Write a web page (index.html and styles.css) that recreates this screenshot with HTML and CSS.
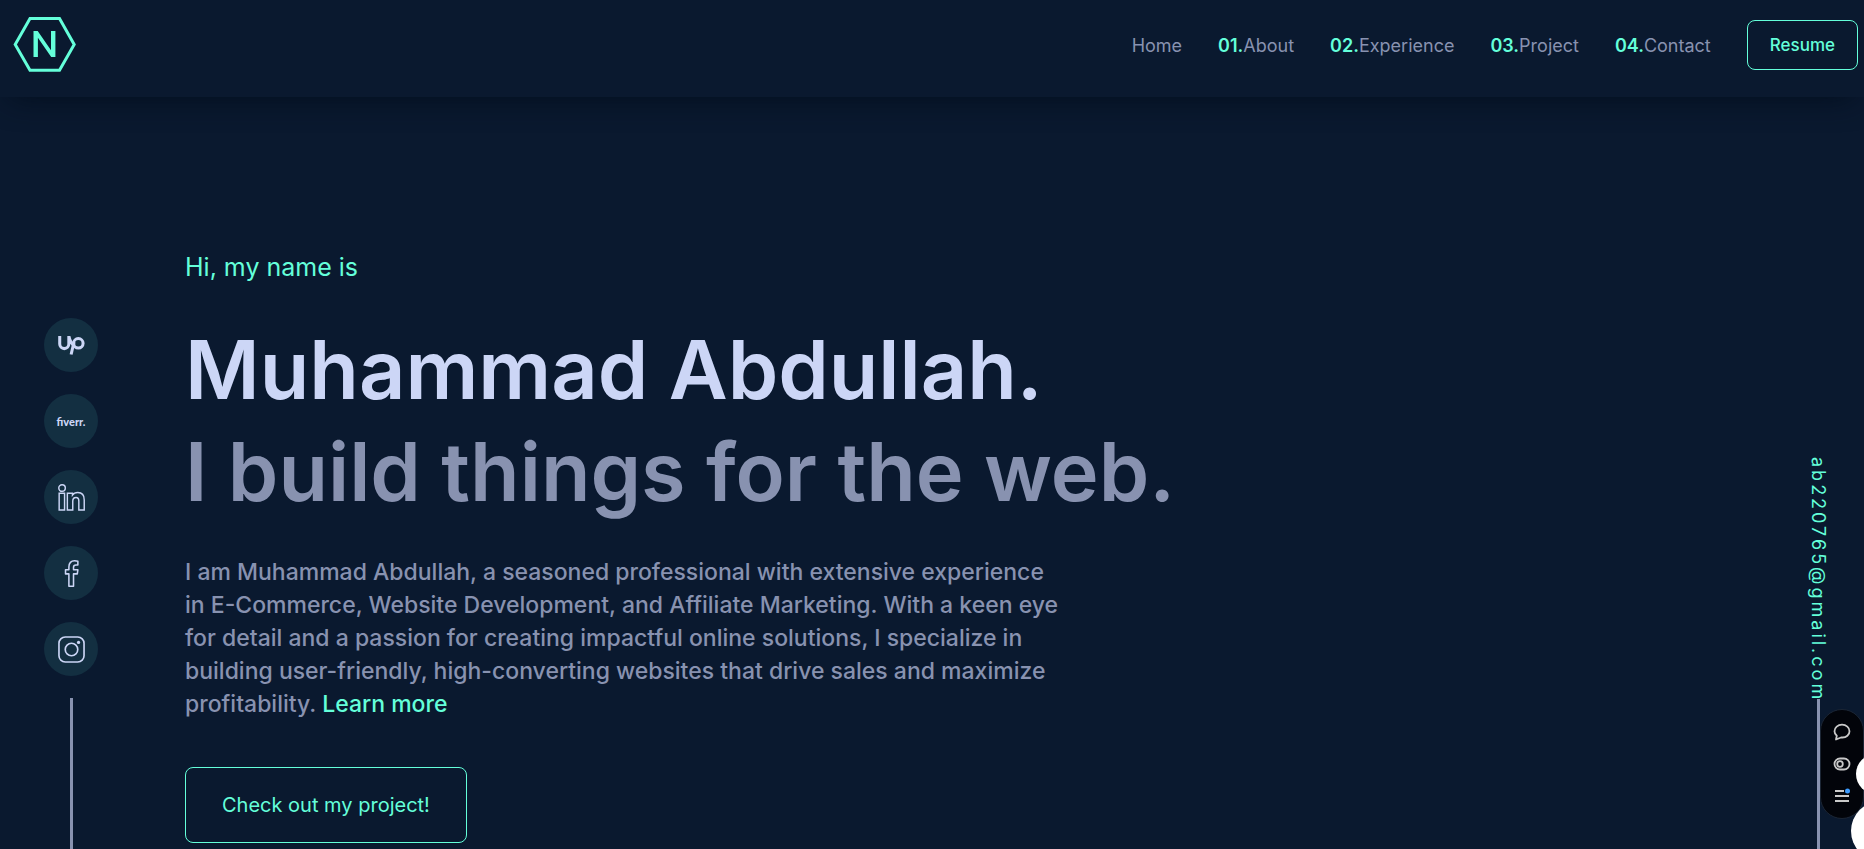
FILE: index.html
```html
<!DOCTYPE html>
<html lang="en">
<head>
<meta charset="utf-8">
<meta name="viewport" content="width=device-width, initial-scale=1">
<title>Muhammad Abdullah</title>
<link rel="stylesheet" href="styles.css">
</head>
<body>
<header class="header">
  <a class="logo" href="#home" aria-label="Home">
    <svg width="64" height="56" viewBox="0 0 64 56" fill="none" stroke="currentColor" stroke-width="3">
      <path d="M17 2.500H46.500L61.200 28.500L46.500 54.200H17L2.200 28.500Z"/>
      <path d="M20.500 41V15H24.700L38 34.200V15H42.400V41H38.200L24.900 21.800V41Z" fill="currentColor" stroke="none"/>
    </svg>
  </a>
  <nav class="nav">
    <a class="nav-link" href="#home">Home</a>
    <a class="nav-link" href="#about"><span class="num">01.</span>About</a>
    <a class="nav-link" href="#experience"><span class="num">02.</span>Experience</a>
    <a class="nav-link" href="#project"><span class="num">03.</span>Project</a>
    <a class="nav-link" href="#contact"><span class="num">04.</span>Contact</a>
    <a class="resume" href="#resume">Resume</a>
  </nav>
</header>
<div class="page">
  <aside class="rail social">
    <a class="social-link" href="#upwork" aria-label="Upwork">
      <svg width="27" height="19" viewBox="0 0 28 20" fill="none" stroke="currentColor" stroke-width="3.200">
        <path d="M1.600 0V8.500A4.800 4.800 0 0 0 11.200 8.500V0C12 4 14.500 8.500 17 10.500"/>
        <circle cx="21.200" cy="7.700" r="5"/>
        <path d="M16.600 6.500L13.600 19.500"/>
      </svg>
    </a>
    <a class="social-link wordmark" href="#fiverr">fiverr.</a>
    <a class="social-link" href="#linkedin" aria-label="LinkedIn">
      <svg width="27" height="27" viewBox="0 0 28 28" fill="none" stroke="currentColor" stroke-width="1.500">
        <circle cx="4.200" cy="4.200" r="3.400"/>
        <path d="M1.200 9.500H6.800V27H1.200ZM9.700 9.500H15V11.500C16.200 9.800 18 8.900 20.500 8.900C25 8.900 27.200 11.800 27.200 16.500V27H21.600V17.500C21.600 15 20.700 13.900 18.700 13.900C16.500 13.900 15.300 15.300 15.300 17.800V27H9.700Z"/>
      </svg>
    </a>
    <a class="social-link" href="#facebook" aria-label="Facebook">
      <svg width="27" height="27" viewBox="0 0 28 28" fill="none" stroke="currentColor" stroke-width="1.600" stroke-linejoin="round">
        <path d="M11.300 27.200V14.400H7.800V10.200H11.300V7.300C11.300 3 13.500.8 17.200.8C18.600.8 19.700 1 20.600 1.300V5.200H18.500C16.700 5.200 16.100 6 16.100 7.600V10.200H20.600L20 14.400H16.100V27.200Z"/>
      </svg>
    </a>
    <a class="social-link" href="#instagram" aria-label="Instagram">
      <svg width="27" height="27" viewBox="0 0 28 28" fill="none" stroke="currentColor" stroke-width="1.700">
        <rect x="1" y="1" width="26" height="26" rx="6.500"/>
        <circle cx="14" cy="14" r="6.500"/>
        <circle cx="21.300" cy="6.700" r="1.700" fill="currentColor" stroke="none"/>
      </svg>
    </a>
    <span class="rail-line"></span>
  </aside>
  <main class="hero">
    <p class="greeting">Hi, my name is</p>
    <h1 class="title">Muhammad Abdullah.</h1>
    <h2 class="title subtitle">I build things for the web.</h2>
    <p class="intro">
      I am Muhammad Abdullah, a seasoned professional with extensive experience<br>
      in E-Commerce, Website Development, and Affiliate Marketing. With a keen eye<br>
      for detail and a passion for creating impactful online solutions, I specialize in<br>
      building user-friendly, high-converting websites that drive sales and maximize<br>
      profitability. <a class="more" href="#about">Learn more</a>
    </p>
    <a class="cta" href="#project">Check out my project!</a>
  </main>
  <aside class="rail contact">
    <a class="email" href="mailto:ab220765@gmail.com">ab220765@gmail.com</a>
    <span class="rail-line"></span>
  </aside>
</div>
<div class="toolbar">
  <button class="tool" type="button" aria-label="Comment">
    <svg width="18" height="18" viewBox="0 0 18 18" fill="none" stroke="currentColor" stroke-width="1.800" stroke-linejoin="round"><path d="M3 16.500L3.800 12.800C2.300 11.500 1.500 10 1.500 8.200C1.500 4.500 4.800 1.700 9 1.700C13.200 1.700 16.500 4.500 16.500 8.200C16.500 12 13.200 14.500 9.500 14.500H8Z"/></svg>
  </button>
  <button class="tool" type="button" aria-label="Toggle">
    <svg width="18" height="18" viewBox="0 0 18 18" fill="none" stroke="currentColor" stroke-width="1.800"><rect x="1.500" y="3.500" width="15" height="11" rx="5.500"/><circle cx="7" cy="9" r="2.800"/></svg>
  </button>
  <button class="tool" type="button" aria-label="Menu">
    <svg width="18" height="18" viewBox="0 0 18 18" fill="none" stroke="currentColor" stroke-width="2"><path d="M2 4H11M2 9H16M2 14H16"/><circle cx="14.500" cy="4" r="2.500" fill="#3b9bff" stroke="none"/></svg>
  </button>
</div>
<span class="bubble bubble-small"></span>
<span class="bubble bubble-large"></span>
</body>
</html>
```
FILE: styles.css
```css
* { box-sizing: border-box; }
body {
  margin: 0;
  height: 100vh;
  display: flex;
  flex-direction: column;
  overflow: hidden;
  background: #0a192f;
  color: #8892b0;
  font-family: Inter, "Liberation Sans", sans-serif;
}
a { color: inherit; text-decoration: none; }
h1, h2, p { margin: 0; }
svg { display: block; }
.header {
  flex: none;
  display: flex;
  justify-content: space-between;
  align-items: flex-start;
  padding: 16px 6px 0 13px;
  height: 97px;
  box-shadow: 0 10px 30px -10px rgba(2, 12, 27, 0.9);
}
.logo { color: #64ffda; }
.nav {
  display: flex;
  align-items: center;
  gap: 36px;
  padding-top: 4px;
  font-size: 18px;
}
.num, .resume { color: #64ffda; }
.num { font-weight: 600; }
.resume {
  padding: 14px 22px;
  border: 1px solid #64ffda;
  border-radius: 8px;
  font-size: 17px;
  font-weight: 500;
  line-height: 20px;
}
.page {
  flex: 1;
  min-height: 0;
  display: grid;
  grid-template-columns: 142px 1fr 92px;
}
.rail {
  display: flex;
  flex-direction: column;
  align-items: center;
}
.rail-line { flex: 1; width: 3px; background: #8892b0; }
.social { gap: 22px; padding-top: 221px; }
.social-link {
  flex: none;
  display: flex;
  align-items: center;
  justify-content: center;
  width: 54px;
  height: 54px;
  border-radius: 50%;
  background: #132f41;
  color: #ccd6f6;
}
.wordmark { font: 900 11px Lato, sans-serif; }
.hero { padding: 155px 0 0 43px; }
.greeting {
  color: #64ffda;
  font-size: 25px;
  line-height: 30px;
}
.title {
  color: #ccd6f6;
  font-size: 81px;
  line-height: 102px;
  font-weight: 600;
}
h1.title { margin-top: 37px; }
.subtitle { color: #8892b0; }
.intro {
  margin-top: 33px;
  font-size: 23px;
  font-weight: 500;
  line-height: 33px;
  white-space: nowrap;
}
.more { color: #64ffda; }
.cta {
  display: inline-block;
  margin-top: 46px;
  padding: 26px 36px;
  border: 1px solid #64ffda;
  border-radius: 8px;
  color: #64ffda;
  font-size: 20px;
  line-height: 22px;
}
.contact { padding-top: 360px; }
.contact .rail-line { margin-top: -3px; }
.email {
  writing-mode: vertical-rl;
  color: #64ffda;
  font-size: 18px;
  line-height: 24px;
  letter-spacing: 3px;
}
.toolbar {
  position: fixed;
  right: 0;
  bottom: 30px;
  display: flex;
  flex-direction: column;
  align-items: center;
  gap: 14px;
  width: 44px;
  padding: 13px 0;
  border: 1px solid #1c2635;
  border-radius: 22px;
  background: #02040a;
}
.tool {
  padding: 0;
  border: 0;
  background: none;
  color: #c9c9c9;
}
.bubble { position: fixed; border-radius: 50%; background: #fff; }
.bubble-small { right: -32px; bottom: 55px; width: 40px; height: 40px; }
.bubble-large { right: -47px; bottom: -12px; width: 60px; height: 60px; }
```
